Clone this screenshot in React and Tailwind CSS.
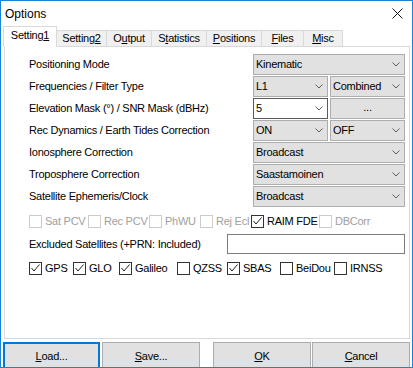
import React from 'react';

const font = { fontFamily: '"Liberation Sans", Arial, sans-serif' };

// Small dropdown chevron used by every combo box
const Chevron = () => (
    <svg width="8" height="5" viewBox="0 0 8 5" className="shrink-0">
        <polyline points="0.5,0.5 4,4 7.5,0.5" fill="none" stroke="#606060" strokeWidth="1" />
    </svg>
);

const Combo = ({ text, w, white }) => (
    <div
        className={`flex items-center justify-between h-[21px] pl-[2px] pr-[4px] border text-[11px] text-black ${w} ${
            white ? 'bg-white border-[#5a5a5a] h-[20px]' : 'bg-[#e1e1e1] border-[#adadad]'
        }`}
    >
        <span>{text}</span>
        <Chevron />
    </div>
);

const CheckMark = () => (
    <svg width="11" height="11" viewBox="0 0 11 11">
        <polyline points="1.5,5 4,8 9.5,1.5" fill="none" stroke="#222" strokeWidth="1" />
    </svg>
);

const Check = ({ label, checked, disabled, w }) => (
    <div className={`flex items-center gap-[3px] shrink-0 whitespace-nowrap ${w}`}>
        <div
            className={`w-[13px] h-[13px] shrink-0 border flex items-center justify-center bg-white ${
                disabled ? 'border-[#cccccc]' : 'border-[#333333]'
            }`}
        >
            {checked && <CheckMark />}
        </div>
        <span className={`text-[11px] ${disabled ? 'text-[#a0a0a0]' : 'text-black'}`}>{label}</span>
    </div>
);

const Tab = ({ children, w, active }) =>
    active ? (
        <div className={`h-[21px] bg-white border border-b-0 border-[#d9d9d9] flex items-center justify-center relative z-10 -mb-px pb-[3px] ${w}`}>
            {children}
        </div>
    ) : (
        <div className={`h-[16px] bg-[#f0f0f0] border border-b-0 border-l-0 border-[#d9d9d9] flex items-center justify-center ${w}`}>
            {children}
        </div>
    );

const Row = ({ label, children }) => (
    <div className="flex items-center h-[21px]">
        <div className="w-[224px] text-[11px] text-black whitespace-nowrap">{label}</div>
        <div className="w-[152px] flex justify-between">{children}</div>
    </div>
);

const Btn = ({ children, focused, w, className = '' }) => (
    <div
        className={`h-[28px] flex items-center justify-center text-[11px] text-black bg-[#e1e1e1] shrink-0 ${w} ${className} ${
            focused ? 'border-2 border-[#0078d7]' : 'border border-[#adadad]'
        }`}
    >
        {children}
    </div>
);

const App = () => {
    return (
        <div style={font} className="w-[413px] h-[368px] bg-white border border-[#1883d7] overflow-hidden flex flex-col tracking-[-0.25px]">
            {/* Title bar */}
            <div className="h-[25px] shrink-0 flex items-center justify-between pl-[4px] pr-[9px]">
                <span className="text-[12px] text-black tracking-normal">Options</span>
                <svg width="11" height="11" viewBox="0 0 11 11">
                    <path d="M0.5 0.5 L10.5 10.5 M10.5 0.5 L0.5 10.5" stroke="#111" strokeWidth="1" />
                </svg>
            </div>

            {/* Tabs */}
            <div className="flex items-end ml-[2px] text-[11px] text-black h-[20px] shrink-0">
                <Tab w="w-[54px]" active>Setting<u>1</u></Tab>
                <Tab w="w-[50px]">Setting<u>2</u></Tab>
                <Tab w="w-[45px]">O<u>u</u>tput</Tab>
                <Tab w="w-[55px]">S<u>t</u>atistics</Tab>
                <Tab w="w-[55px]"><u>P</u>ositions</Tab>
                <Tab w="w-[42px]"><u>F</u>iles</Tab>
                <Tab w="w-[39px]"><u>M</u>isc</Tab>
            </div>

            {/* Tab panel */}
            <div className="ml-[3px] w-[406px] h-[293px] shrink-0 border border-[#d9d9d9] bg-white pt-[7px] pl-[24px] flex flex-col">
                <div className="flex flex-col gap-[1px]">
                    <Row label="Positioning Mode">
                        <Combo text="Kinematic" w="w-[152px]" />
                    </Row>
                    <Row label="Frequencies / Filter Type">
                        <Combo text="L1" w="w-[75px]" />
                        <Combo text="Combined" w="w-[75px]" />
                    </Row>
                    <Row label="Elevation Mask (°) / SNR Mask (dBHz)">
                        <Combo text="5" w="w-[75px]" white />
                        <div className="w-[75px] h-[21px] bg-[#e1e1e1] border border-[#adadad] flex items-center justify-center text-[11px] pb-[2px]">
                            ...
                        </div>
                    </Row>
                    <Row label="Rec Dynamics / Earth Tides Correction">
                        <Combo text="ON" w="w-[75px]" />
                        <Combo text="OFF" w="w-[75px]" />
                    </Row>
                    <Row label="Ionosphere Correction">
                        <Combo text="Broadcast" w="w-[152px]" />
                    </Row>
                    <Row label="Troposphere Correction">
                        <Combo text="Saastamoinen" w="w-[152px]" />
                    </Row>
                    <Row label="Satellite Ephemeris/Clock">
                        <Combo text="Broadcast" w="w-[152px]" />
                    </Row>
                </div>

                {/* Option checkboxes */}
                <div className="flex items-center h-[20px] mt-[4px]">
                    <Check label="Sat PCV" w="w-[59px]" disabled />
                    <Check label="Rec PCV" w="w-[61px]" disabled />
                    <Check label="PhWU" w="w-[51px]" disabled />
                    <Check label="Rej Ecl" w="w-[51px]" disabled />
                    <Check label="RAIM FDE" w="w-[68px]" checked />
                    <Check label="DBCorr" w="w-[60px]" disabled />
                </div>

                {/* Excluded satellites */}
                <div className="flex items-center h-[20px] mt-[3px]">
                    <div className="w-[198px] text-[11px] text-black whitespace-nowrap">Excluded Satellites (+PRN: Included)</div>
                    <div className="w-[178px] h-[20px] bg-white border border-[#7a7a7a]" />
                </div>

                {/* Constellations */}
                <div className="flex items-center h-[20px] mt-[4px]">
                    <Check label="GPS" w="w-[44px]" checked />
                    <Check label="GLO" w="w-[46px]" checked />
                    <Check label="Galileo" w="w-[58px]" checked />
                    <Check label="QZSS" w="w-[50px]" />
                    <Check label="SBAS" w="w-[53px]" checked />
                    <Check label="BeiDou" w="w-[54px]" />
                    <Check label="IRNSS" w="w-[60px]" />
                </div>
            </div>

            {/* Buttons */}
            <div className="flex mt-[3px] ml-[2px]">
                <Btn w="w-[97px]" focused><u>L</u>oad...</Btn>
                <Btn w="w-[98px]" className="ml-[2px]"><u>S</u>ave...</Btn>
                <Btn w="w-[98px]" className="ml-[13px]"><u>O</u>K</Btn>
                <Btn w="w-[98px]" className="ml-[1px]"><u>C</u>ancel</Btn>
            </div>
        </div>
    );
};

export default App;
